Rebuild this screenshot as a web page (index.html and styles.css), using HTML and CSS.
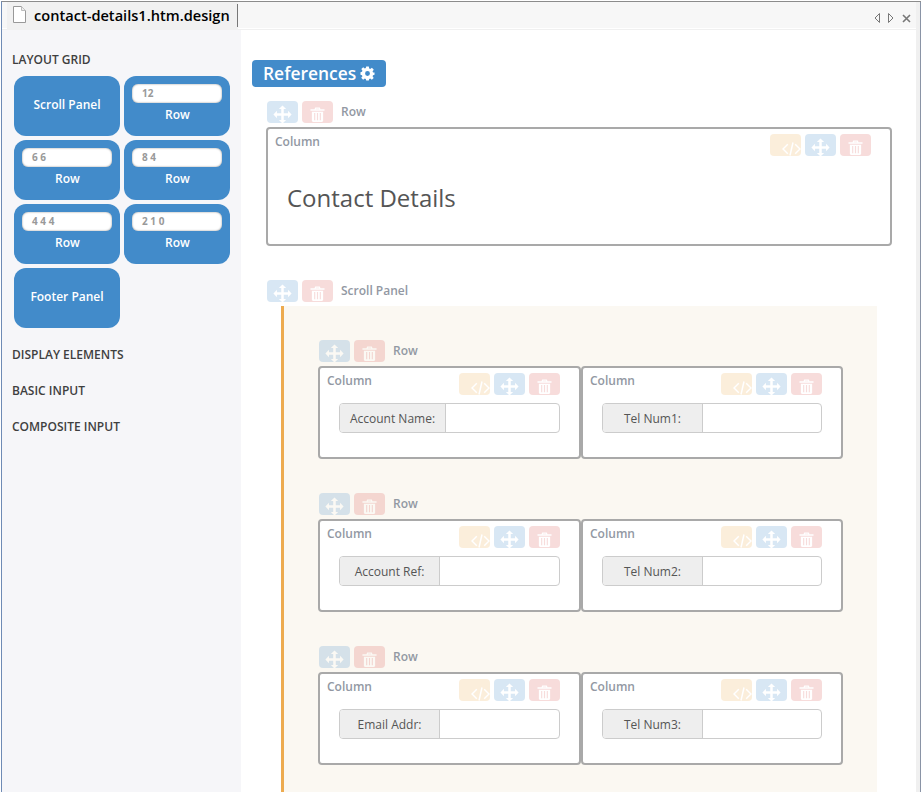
FILE: index.html
```html
<!DOCTYPE html>
<html lang="en">
<head>
<meta charset="utf-8">
<title>contact-details1.htm.design</title>
<link rel="stylesheet" href="styles.css">
</head>
<body>
<svg class="sprite" aria-hidden="true">
  <symbol id="i-move" viewBox="0 0 24 24"><path d="M12 0.5 16.6 5H13.6V10.4H19V7.4L23.5 12 19 16.6V13.6H13.6V19H16.6L12 23.5 7.4 19H10.4V13.6H5V16.6L0.5 12 5 7.4V10.4H10.4V5H7.4Z"/></symbol>
  <symbol id="i-trash" viewBox="0 0 16 16"><path fill-rule="evenodd" d="M5.5 0.5H10.5L11.2 2.5H15.5V4H0.5V2.5H4.8ZM6.5 1.8 6.2 2.5H9.8L9.5 1.8ZM2 5H14V15L13 16H3L2 15ZM4.4 6.5V14H5.6V6.5ZM7.4 6.5V14H8.6V6.5ZM10.4 6.5V14H11.6V6.5Z"/></symbol>
  <symbol id="i-code" viewBox="0 0 19 14"><path d="M5.8 2.2 1 7 5.8 11.8M13.2 2.2 18 7 13.2 11.8M11 0.5 8 13.5" fill="none" stroke="#fff" stroke-width="1.5"/></symbol>
  <symbol id="i-gear" viewBox="0 0 16 16"><path fill-rule="evenodd" d="M6.6 0.5H9.4L9.8 2.6 10.9 3.1 12.7 1.9 14.7 3.9 13.4 5.7 13.9 6.8 15.5 7V9.4L13.9 9.8 13.4 10.9 14.6 12.7 12.6 14.7 10.9 13.4 9.8 13.9 9.4 15.5H6.6L6.2 13.9 5.1 13.4 3.3 14.6 1.3 12.6 2.6 10.9 2.1 9.8 0.5 9.4V6.6L2.1 6.2 2.6 5.1 1.4 3.3 3.4 1.3 5.1 2.6 6.2 2.1ZM8 5.4A2.6 2.6 0 1 0 8 10.6 2.6 2.6 0 1 0 8 5.4Z"/></symbol>
</svg>
<div class="window">
  <div class="editor">
    <header class="tabbar">
      <div class="tab">
        <svg class="file-icon" viewBox="0 0 14 17"><path d="M1.5 0.5H9.5L13.5 4.5V16.5H1.5Z" fill="#fff" stroke="#999"/><path d="M9.5 0.5V4.5H13.5" fill="#eee" stroke="#bbb"/></svg>
        <span class="tab-title">contact-details1.htm.design</span>
      </div>
      <div class="tab-controls">
        <svg class="ctl" viewBox="0 0 7 10"><path d="M5.5 0.5V9.5L1 5Z" fill="none" stroke="#777"/></svg>
        <svg class="ctl" viewBox="0 0 7 10"><path d="M1.5 0.5V9.5L6 5Z" fill="none" stroke="#777"/></svg>
        <svg class="ctl-close" viewBox="0 0 9 9"><path d="M1 1 8 8M8 1 1 8" fill="none" stroke="#777" stroke-width="1.6"/></svg>
      </div>
    </header>
    <div class="workspace">
      <aside class="sidebar">
        <h2 class="side-title">LAYOUT GRID</h2>
        <div class="palette">
          <div class="card card-plain">Scroll Panel</div>
          <div class="card"><div class="card-input">12</div><div class="card-label">Row</div></div>
          <div class="card"><div class="card-input">6 6</div><div class="card-label">Row</div></div>
          <div class="card"><div class="card-input">8 4</div><div class="card-label">Row</div></div>
          <div class="card"><div class="card-input">4 4 4</div><div class="card-label">Row</div></div>
          <div class="card"><div class="card-input">2 1 0</div><div class="card-label">Row</div></div>
          <div class="card card-plain">Footer Panel</div>
        </div>
        <h2 class="side-title side-next">DISPLAY ELEMENTS</h2>
        <h2 class="side-title side-next">BASIC INPUT</h2>
        <h2 class="side-title side-next">COMPOSITE INPUT</h2>
      </aside>
      <main class="canvas">
        <div class="references">References <svg class="gear"><use href="#i-gear"/></svg></div>

        <div class="toolbar">
          <span class="tool tool-move"><svg class="ic-move"><use href="#i-move"/></svg></span>
          <span class="tool tool-trash"><svg class="ic-trash"><use href="#i-trash"/></svg></span>
          <span class="tool-label">Row</span>
        </div>
        <section class="column column-full">
          <div class="column-head">
            <span class="column-label">Column</span>
            <div class="column-tools">
              <span class="tool tool-code"><svg class="ic-code"><use href="#i-code"/></svg></span>
              <span class="tool tool-move"><svg class="ic-move"><use href="#i-move"/></svg></span>
              <span class="tool tool-trash"><svg class="ic-trash"><use href="#i-trash"/></svg></span>
            </div>
          </div>
          <h1 class="heading">Contact Details</h1>
        </section>

        <div class="toolbar toolbar-panel">
          <span class="tool tool-move"><svg class="ic-move"><use href="#i-move"/></svg></span>
          <span class="tool tool-trash"><svg class="ic-trash"><use href="#i-trash"/></svg></span>
          <span class="tool-label">Scroll Panel</span>
        </div>
        <section class="panel">

          <div class="toolbar toolbar-row">
            <span class="tool tool-move"><svg class="ic-move"><use href="#i-move"/></svg></span>
            <span class="tool tool-trash"><svg class="ic-trash"><use href="#i-trash"/></svg></span>
            <span class="tool-label">Row</span>
          </div>
          <div class="row">
            <div class="column">
              <div class="column-head">
                <span class="column-label">Column</span>
                <div class="column-tools">
                  <span class="tool tool-code"><svg class="ic-code"><use href="#i-code"/></svg></span>
                  <span class="tool tool-move"><svg class="ic-move"><use href="#i-move"/></svg></span>
                  <span class="tool tool-trash"><svg class="ic-trash"><use href="#i-trash"/></svg></span>
                </div>
              </div>
              <div class="field"><span class="addon addon-lg">Account Name:</span><span class="field-input"></span></div>
            </div>
            <div class="column">
              <div class="column-head">
                <span class="column-label">Column</span>
                <div class="column-tools">
                  <span class="tool tool-code"><svg class="ic-code"><use href="#i-code"/></svg></span>
                  <span class="tool tool-move"><svg class="ic-move"><use href="#i-move"/></svg></span>
                  <span class="tool tool-trash"><svg class="ic-trash"><use href="#i-trash"/></svg></span>
                </div>
              </div>
              <div class="field"><span class="addon">Tel Num1:</span><span class="field-input"></span></div>
            </div>
          </div>

          <div class="toolbar toolbar-row toolbar-next">
            <span class="tool tool-move"><svg class="ic-move"><use href="#i-move"/></svg></span>
            <span class="tool tool-trash"><svg class="ic-trash"><use href="#i-trash"/></svg></span>
            <span class="tool-label">Row</span>
          </div>
          <div class="row">
            <div class="column">
              <div class="column-head">
                <span class="column-label">Column</span>
                <div class="column-tools">
                  <span class="tool tool-code"><svg class="ic-code"><use href="#i-code"/></svg></span>
                  <span class="tool tool-move"><svg class="ic-move"><use href="#i-move"/></svg></span>
                  <span class="tool tool-trash"><svg class="ic-trash"><use href="#i-trash"/></svg></span>
                </div>
              </div>
              <div class="field"><span class="addon">Account Ref:</span><span class="field-input"></span></div>
            </div>
            <div class="column">
              <div class="column-head">
                <span class="column-label">Column</span>
                <div class="column-tools">
                  <span class="tool tool-code"><svg class="ic-code"><use href="#i-code"/></svg></span>
                  <span class="tool tool-move"><svg class="ic-move"><use href="#i-move"/></svg></span>
                  <span class="tool tool-trash"><svg class="ic-trash"><use href="#i-trash"/></svg></span>
                </div>
              </div>
              <div class="field"><span class="addon">Tel Num2:</span><span class="field-input"></span></div>
            </div>
          </div>

          <div class="toolbar toolbar-row toolbar-next">
            <span class="tool tool-move"><svg class="ic-move"><use href="#i-move"/></svg></span>
            <span class="tool tool-trash"><svg class="ic-trash"><use href="#i-trash"/></svg></span>
            <span class="tool-label">Row</span>
          </div>
          <div class="row">
            <div class="column">
              <div class="column-head">
                <span class="column-label">Column</span>
                <div class="column-tools">
                  <span class="tool tool-code"><svg class="ic-code"><use href="#i-code"/></svg></span>
                  <span class="tool tool-move"><svg class="ic-move"><use href="#i-move"/></svg></span>
                  <span class="tool tool-trash"><svg class="ic-trash"><use href="#i-trash"/></svg></span>
                </div>
              </div>
              <div class="field"><span class="addon">Email Addr:</span><span class="field-input"></span></div>
            </div>
            <div class="column">
              <div class="column-head">
                <span class="column-label">Column</span>
                <div class="column-tools">
                  <span class="tool tool-code"><svg class="ic-code"><use href="#i-code"/></svg></span>
                  <span class="tool tool-move"><svg class="ic-move"><use href="#i-move"/></svg></span>
                  <span class="tool tool-trash"><svg class="ic-trash"><use href="#i-trash"/></svg></span>
                </div>
              </div>
              <div class="field"><span class="addon">Tel Num3:</span><span class="field-input"></span></div>
            </div>
          </div>

        </section>
      </main>
    </div>
  </div>
  <div class="edge"></div>
</div>
</body>
</html>
```

FILE: styles.css
```css
* { box-sizing: border-box; }
html, body { margin: 0; height: 100%; overflow: hidden; background: #fff; }
body { font-family: "Open Sans", "Liberation Sans", sans-serif; }
.sprite { display: none; }

.window {
  display: flex;
  height: 791px;
  margin: 1px 0 0 1px;
  border-top: 1px solid #8c8c8c;
  border-left: 1px solid #6f8bb5;
  overflow: hidden;
}
.editor { width: 914px; display: flex; flex-direction: column; }
.edge { width: 5px; background: #f0f0f0; border-right: 1px solid #8a94a6; }

.tabbar {
  flex: none;
  display: flex;
  justify-content: space-between;
  align-items: flex-start;
  height: 28px;
  background: #f7f7f7;
  border-bottom: 1px solid #f0f0f0;
  box-shadow: inset 0 -1px 0 #fff;
}
.tab {
  display: flex;
  align-items: center;
  width: 231px;
  height: 28px;
  margin-left: 5px;
  padding: 0 0 3px 5px;
  background: #f1f1f1;
  position: relative;
}
.tab::after {
  content: "";
  position: absolute;
  right: 0;
  top: 2px;
  height: 23px;
  width: 1px;
  background: #777;
}
.file-icon { width: 14px; height: 17px; margin-right: 8px; }
.tab-title { font-size: 14.6px; font-weight: 600; color: #000; white-space: nowrap; }
.tab-controls { display: flex; align-items: center; gap: 6px; margin: 11px 5px 0 0; }
.ctl { width: 7px; height: 10px; }
.ctl-close { width: 9px; height: 9px; margin-left: 2px; }

.workspace { flex: 1; display: flex; min-height: 0; }
.sidebar { width: 239px; flex: none; background: #f6f6f9; padding: 22px 0 0 10px; }
.side-title { margin: 0; font-size: 12px; line-height: 16px; font-weight: 600; color: #3f3f3f; }
.side-next { margin-top: 20px; }
.palette {
  display: grid;
  grid-template-columns: 106px 106px;
  grid-auto-rows: 60px;
  gap: 4px;
  margin: 8px 0 -1px 2px;
}
.card { background: #428bca; border-radius: 12px; color: #fff; font-size: 12px; font-weight: 600; text-align: center; padding-top: 8px; }
.card-plain { display: flex; align-items: center; justify-content: center; padding: 0 0 3px; }
.card-input {
  height: 19px;
  margin: 0 8px;
  padding-left: 10px;
  border-radius: 6px;
  background: #fff;
  box-shadow: inset 0 0 2px #888;
  color: #999;
  font-size: 10px;
  font-weight: 700;
  line-height: 19px;
  text-align: left;
}
.card-label { margin: 3px 0 0 1px; line-height: 17px; }

.canvas { flex: 1; min-width: 0; background: #fff; padding: 30px 0 0 11px; overflow: hidden; }
.references {
  display: flex;
  align-items: center;
  gap: 4px;
  width: 134px;
  height: 27px;
  padding: 0 0 1px 11px;
  border-radius: 4px;
  background: #428bca;
  color: #fff;
  font-size: 17.4px;
  font-weight: 600;
}
.gear { width: 15px; height: 15px; fill: #fff; }

.toolbar { display: flex; align-items: center; gap: 4px; height: 22px; margin: 14px 0 4px 15px; }
.toolbar-panel { margin-top: 34px; }
.toolbar-row { margin: 0 0 4px 1px; }
.toolbar-next { margin-top: 34px; }
.tool {
  display: flex;
  justify-content: center;
  align-items: flex-end;
  width: 31px;
  height: 22px;
  border-radius: 4px;
  opacity: .2;
  overflow: visible;
}
.tool-move { background: #428bca; }
.tool-trash { background: #d9534f; }
.tool-code { background: #f0ad4e; justify-content: flex-end; }
.ic-move { width: 19px; height: 19px; fill: #fff; margin-bottom: -1px; }
.ic-trash { width: 15px; height: 15px; fill: #fff; margin-bottom: 1px; }
.ic-code { width: 19px; height: 14px; }
.tool-label { margin-left: 4px; font-size: 12px; font-weight: 600; line-height: 22px; color: #9298a3; }

.column { background: #fff; border: 2px solid #a9a9a9; border-radius: 4px; padding: 5px 19px 24px 7px; }
.column-full { width: 626px; margin-left: 14px; padding-bottom: 0; height: 119px; }
.column-head { display: flex; justify-content: space-between; align-items: flex-start; }
.column-label { font-size: 12px; font-weight: 600; line-height: 14px; color: #9298a3; margin-top: 1px; }
.column-tools { display: flex; gap: 4px; }
.heading { margin: 25px 0 0 12px; font-size: 24px; font-weight: 400; line-height: 34px; color: #555; }

.panel {
  width: 596px;
  height: 600px;
  margin-left: 29px;
  padding: 34px 0 0 34px;
  border-left: 3px solid #edab50;
  background: #fbf8f2;
}
.row { display: grid; grid-template-columns: 263px 262px; }
.field {
  display: flex;
  height: 30px;
  margin: 8px 0 0 12px;
  border: 1px solid #ccc;
  border-radius: 4px;
  background: #fff;
  overflow: hidden;
}
.addon {
  flex: none;
  width: 100px;
  padding-top: 1px;
  background: #eee;
  border-right: 1px solid #ccc;
  color: #555;
  font-size: 12px;
  line-height: 28px;
  text-align: center;
}
.addon-lg { width: 106px; }
.field-input { flex: 1; }
```
